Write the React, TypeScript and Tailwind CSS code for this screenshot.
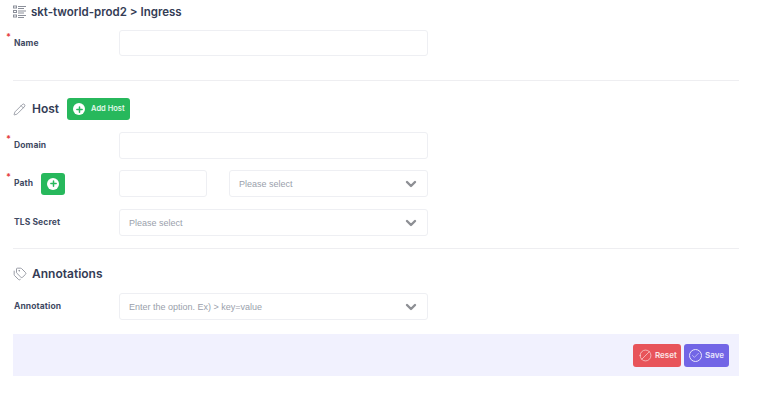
import { ChevronDown, Check, Ban, Pencil, Tags, Plus } from "lucide-react";
import type { ReactNode } from "react";

function Label({ text, required }: { text: string; required?: boolean }) {
  return (
    <span className="relative ml-px text-[8.5px] leading-none font-bold text-[#3f4a63] tracking-[0.1px]">
      {required && <span className="absolute left-[-8px] top-[-7px] text-[9px] text-[#e53e3e]">*</span>}
      {text}
    </span>
  );
}

function Select({ text, width }: { text: string; width: string }) {
  return (
    <div className={`${width} h-[27px] border border-[#eeeff3] rounded-[3px] bg-white flex items-center justify-between pl-[9px] pr-[8px]`}>
      <span className="relative top-px text-[9px] text-[#9a9fac] font-['Liberation_Sans',sans-serif]">{text}</span>
      <ChevronDown size={16} strokeWidth={3.6} className="text-[#8d8f94]" />
    </div>
  );
}

function Row({ label, children, className }: { label: ReactNode; children: ReactNode; className?: string }) {
  return (
    <div className={`flex items-center ${className ?? ""}`}>
      <div className="w-[106px] flex items-center">{label}</div>
      {children}
    </div>
  );
}

function PlusDot({ size }: { size: number }) {
  return (
    <span style={{ width: size, height: size }} className="rounded-full bg-white flex items-center justify-center">
      <Plus size={size - 3} strokeWidth={4} className="text-[#27b85c]" />
    </span>
  );
}

function ListIcon() {
  return (
    <svg width="13" height="13" viewBox="0 0 13 13" fill="none" stroke="#8b8f99" strokeWidth="1">
      <rect x="0.5" y="1" width="3" height="2" />
      <rect x="0.5" y="5.5" width="3" height="2" />
      <rect x="0.5" y="10" width="3" height="2" />
      <path d="M5 1.5h8M5 3.5h6M5 6h8M5 8h6M5 10.5h8M5 12.5h6" />
    </svg>
  );
}

export default function App() {
  return (
    <div className="w-[780px] h-[415px] bg-white pl-[13px] font-['Inter',sans-serif] overflow-hidden">
      <div className="w-[726px]">
        {/* title */}
        <div className="h-[22px] flex items-center gap-[5px]">
          <ListIcon />
          <span className="relative top-[2px] text-[11.5px] font-semibold text-[#343c55]">skt-tworld-prod2 &gt; Ingress</span>
        </div>

        <Row label={<Label text="Name" required />} className="mt-[8px]">
          <div className="w-[309px] h-[26px] border border-[#eeeff3] rounded-[3px]" />
        </Row>
        <div className="h-px bg-[#eeeef1] mt-[24px] mb-px" />

        {/* host */}
        <div className="h-[24px] flex items-center mt-[16px]">
          <Pencil size={13} strokeWidth={1.2} className="text-[#6d7280] mr-[6px]" />
          <span className="text-[12px] font-semibold text-[#343c55] mr-[8px]">Host</span>
          <div className="w-[63px] h-[22px] bg-[#27b85c] rounded-[3px] flex items-center pl-[6px] gap-[6px]">
            <PlusDot size={12} />
            <span className="text-[7.5px] font-semibold text-[#e2f8ea]">Add Host</span>
          </div>
        </div>

        <Row label={<Label text="Domain" required />} className="mt-[11px]">
          <div className="w-[309px] h-[27px] border border-[#eeeff3] rounded-[3px]" />
        </Row>
        <div className="flex items-center mt-[11px]">
          <div className="w-[106px] flex items-center gap-[8px]">
            <Label text="Path" required />
            <div className="w-[24px] h-[22px] bg-[#27b85c] rounded-[3px] flex items-center justify-center">
              <PlusDot size={12} />
            </div>
          </div>
          <div className="w-[88px] h-[27px] border border-[#eeeff3] rounded-[3px] mr-[22px]" />
          <Select text="Please select" width="w-[199px]" />
        </div>
        <Row label={<Label text="TLS Secret" />} className="mt-[12px]">
          <Select text="Please select" width="w-[309px]" />
        </Row>
        <div className="h-px bg-[#eeeef1] mt-[12px] mb-px" />

        {/* annotations */}
        <div className="h-[20px] flex items-center gap-[5px] mt-[15px]">
          <Tags size={14} strokeWidth={1.5} className="text-[#8b8f99]" />
          <span className="text-[12px] font-semibold text-[#343c55]">Annotations</span>
        </div>
        <Row label={<Label text="Annotation" />} className="mt-[9px]">
          <Select text="Enter the option. Ex) > key=value" width="w-[309px]" />
        </Row>

        {/* footer */}
        <div className="h-[42px] bg-[#f1f1fe] mt-[14px] flex items-center justify-end gap-[3px] pr-[10px]">
          <div className="w-[48px] h-[23px] bg-[#e8545a] rounded-[3px] flex items-center pl-[6px] gap-[3px] text-[#fbe6e7]">
            <Ban size={13} strokeWidth={1.2} className="-scale-x-100" />
            <span className="text-[8px] font-semibold">Reset</span>
          </div>
          <div className="w-[45px] h-[23px] bg-[#7265e6] rounded-[3px] flex items-center pl-[5px] gap-[3px] text-[#e9e6fc]">
            <span className="w-[13px] h-[13px] rounded-full border border-[#e9e6fc] flex items-center justify-center">
              <Check size={9} strokeWidth={1.6} />
            </span>
            <span className="text-[8px] font-semibold">Save</span>
          </div>
        </div>
      </div>
    </div>
  );
}
